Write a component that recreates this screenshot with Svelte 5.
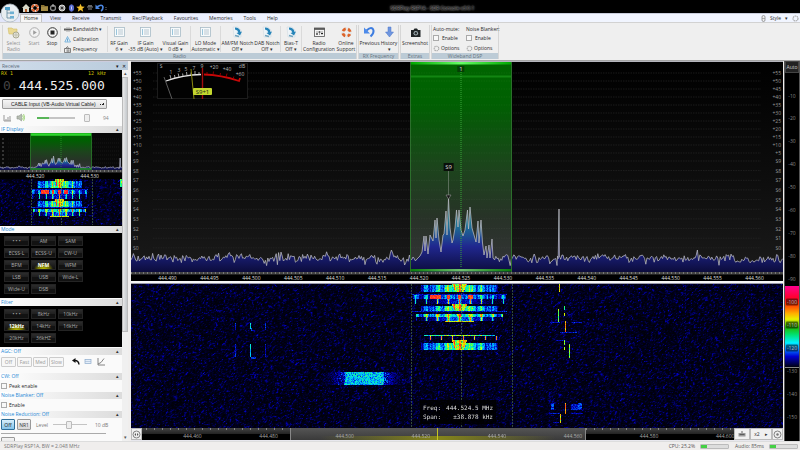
<script>
  import { onMount } from 'svelte';

  const tabs = ['View', 'Receive', 'Transmit', 'Rec/Playback', 'Favourites', 'Memories', 'Tools', 'Help'];
  const modes = ['• • •', 'AM', 'SAM', 'ECSS-L', 'ECSS-U', 'CW-U', 'BFM', 'NFM', 'WFM', 'LSB', 'USB', 'Wide-L', 'Wide-U', 'DSB'];
  const filters = ['• • •', '8kHz', '10kHz', '12kHz', '14kHz', '16kHz', '20kHz', '36kHZ'];

  const W = 652;
  const H = 210;

  function makeRandom(seed) {
    let s = seed;
    return () => {
      s = (s * 1664525 + 1013904223) % 4294967296;
      return s / 4294967296;
    };
  }

  // level labels: dB over S9 in 8 px steps, then S units
  const levels = [];
  for (let i = 0; i < 11; i++) levels.push({ t: '+' + (55 - i * 5), y: 11 + i * 8 });
  for (let i = 0; i < 10; i++) levels.push({ t: 'S' + (9 - i), y: 99 + i * 9.65 });

  const freqs = [];
  for (let i = 0; i < 15; i++) freqs.push({ t: (444.49 + i * 0.005).toFixed(3), x: ((36.5 + i * 41.93) / W) * 100 });

  const scale = [];
  for (let i = 0; i < 8; i++) scale.push({ t: (444.46 + i * 0.02).toFixed(3), x: ((50.5 + i * 76.1) / 592) * 100 });

  const dbm = [];
  for (let i = 1; i < 16; i++) dbm.push({ t: '-' + i * 10, y: ((34.5 + (i - 1) * 22.95) / 380) * 100, boxed: i > 9 && i < 13 });

  const peaks = [
    [417, 259], [420, 256], [422, 252], [424, 236], [425, 251], [426, 236], [428, 254], [430, 235], [432, 239], [433, 241],
    [435, 220], [436, 238], [437, 218], [439, 240], [441, 252], [443, 235], [444, 234], [446, 211], [447, 235], [448.5, 199],
    [450, 228], [452, 243], [453, 240], [455, 228], [456.5, 210], [458, 227], [459, 210], [461, 230], [463, 236], [465, 230],
    [467.5, 210], [468.5, 229], [470, 207], [472, 228], [474, 235], [476, 242], [478, 221], [479, 243], [481, 220],
    [482.5, 243], [484, 255], [486, 246], [487, 258], [489, 245], [490, 258], [492, 239], [493, 258]
  ];

  function buildTrace() {
    const rnd = makeRandom(41);
    const pts = [];
    let base = 0;
    for (let x = 131; x <= 783; x += 1.2) {
      base = base * 0.75 + (rnd() - 0.5) * 3.2;
      const jitter = (rnd() - 0.5) * 5.5;
      const spike = rnd();
      if (x > 416 && x < 494) continue;
      let y = 258 + base + jitter;
      if (spike > 0.96) y -= 4;
      if (spike < 0.04) y += 5;
      pts.push([x, y]);
    }
    pts.push(...peaks, [557.5, 256], [559, 209], [560.5, 258]);
    return pts.sort((a, b) => a[0] - b[0]);
  }
  const trace = buildTrace();
  const line = trace.map(([x, y]) => `${(x - 131).toFixed(1)},${(y - 62).toFixed(1)}`).join(' ');
  const area = `0,${H} ${line} ${W},${H}`;

  const miniTrace = trace.map(([x, y]) => [61 + (x - 461) * 0.604, 34.5 + (y - 259) * 0.19]).filter(([x]) => x >= -1 && x <= 123);
  const miniLine = miniTrace.map(([x, y]) => `${x.toFixed(1)},${y.toFixed(1)}`).join(' ');
  const miniArea = `0,37 ${miniLine} 122,37`;

  const stops = [
    [0, 0, 0, 8], [0.12, 0, 0, 40], [0.35, 0, 0, 190], [0.48, 0, 120, 255], [0.58, 0, 225, 235],
    [0.68, 30, 255, 110], [0.78, 220, 255, 0], [0.88, 255, 130, 0], [1, 255, 25, 50]
  ];
  function colour(v) {
    const c = Math.max(0, Math.min(1, v));
    for (let i = 1; i < stops.length; i++) {
      if (c <= stops[i][0]) {
        const a = stops[i - 1];
        const b = stops[i];
        const k = (c - a[0]) / (b[0] - a[0]);
        return [a[1] + (b[1] - a[1]) * k, a[2] + (b[2] - a[2]) * k, a[3] + (b[3] - a[3]) * k];
      }
    }
    return [255, 25, 50];
  }

  function comb(dx, step, width) {
    const d = Math.abs(dx - Math.round(dx / step) * step);
    return Math.exp(-((d / width) ** 2));
  }

  // strength of the FM transmission at distance dx from its carrier and row y
  function burst(dx, y) {
    const a = Math.abs(dx);
    const env = Math.exp(-((dx / 32) ** 2));
    const grain = 0.06 * Math.sin(dx * 2.1) + 0.05 * Math.sin(dx * 0.9 + 1);
    const wide = (y0, y1) => {
      const k = (y - y0) / (y1 - y0);
      if (a < 8 - k * 4) return 0.76 + 0.12 * comb(dx, 5, 1) + grain;
      if (k < 0.3 || a > 38) return 0;
      return 0.24 + 0.3 * env + 0.26 * comb(dx, 11, 2.5 + k) * (0.4 + 0.6 * env) + grain;
    };
    if (y < 8) return wide(-2, 8);
    if (y === 10 || y === 27) return a < 48 ? 0.36 : 0;
    if (y > 10 && y < 15) {
      if (a > 46) return 0;
      if (dx > -30 && dx < -18) return 0.97;
      if (a < 2 || (dx > 8 && dx < 14) || Math.abs(dx + 11) < 2) return 0.97;
      return a > 28 ? 0.3 + 0.3 * comb(dx, 11, 2) + grain : 0.44 + 0.2 * comb(dx, 11, 2.5) + grain;
    }
    if (y >= 15 && y < 20) return a < 46 ? 0.36 * env + 0.55 * comb(dx, 11, 0.9) : 0;
    if (y >= 20 && y < 28) return wide(19, 28);
    if (y >= 30 && y < 33) return a < 44 ? 0.36 + 0.22 * env + 0.35 * comb(dx, 11, 2) + grain : 0;
    if (y >= 33 && y < 37) return a < 44 ? 0.45 * env + 0.5 * comb(dx, 11, 1.2) : 0;
    if (y === 37) return a < 15 ? 0.8 : 0;
    if (y === 51) return a < 36 ? 0.5 + 0.25 * env + grain : 0;
    if (y >= 52 && y < 56) return a < 40 ? 0.85 * comb(dx - 4, 11, 0.9) : 0;
    if (y >= 56 && y < 66) return wide(55, 66);
    return 0;
  }

  // short narrow traces: x0, x1, y0, y1, level
  const marks = [
    [104, 104, 39, 45, 0.38], [119, 119, 39, 44, 0.55], [120, 120, 44, 45, 0.5], [120, 123, 46, 46, 0.35], [134, 134, 39, 45, 0.38],
    [104, 104, 60, 72, 0.36], [119, 119, 60, 72, 0.56], [120, 124, 73, 74, 0.38], [134, 134, 60, 72, 0.34], [119, 130, 90, 90, 0.22],
    [428, 428, 0, 7, 0.78], [427, 427, 25, 37, 0.7], [433, 433, 22, 25, 0.7], [433, 433, 29, 31, 0.72], [434, 434, 37, 47, 0.86],
    [419, 428, 38, 38, 0.38], [441, 450, 38, 38, 0.38], [429, 445, 48, 48, 0.36], [425, 432, 56, 56, 0.34],
    [433, 433, 56, 60, 0.72], [433, 433, 63, 65, 0.72], [438, 438, 60, 73, 0.7], [434, 434, 119, 129, 0.88],
    [420, 422, 119, 125, 0.4], [440, 450, 120, 125, 0.35], [447, 450, 119, 124, 0.42], [418, 428, 129, 129, 0.36], [440, 451, 129, 129, 0.32],
    [429, 429, 130, 138, 0.8], [422, 427, 138, 138, 0.34]
  ];

  let fall;
  let miniFall;

  function paint(canvas, w, h, seed, level) {
    const ctx = canvas.getContext('2d');
    const img = ctx.createImageData(w, h);
    const rnd = makeRandom(seed);
    const noise = new Float32Array((w + 1) * (h + 1));
    for (let i = 0; i < noise.length; i++) noise[i] = rnd();
    for (let y = 0; y < h; y++) {
      for (let x = 0; x < w; x++) {
        const i = y * (w + 1) + x;
        const n = noise[i] * 0.4 + noise[i + 1] * 0.35 + noise[i + w + 1] * 0.25;
        let v = Math.pow(n, 2.5) * 0.4;
        const s = level(x, y);
        if (s > 0.03) v = Math.max(v, s + (rnd() - 0.5) * 0.16);
        const c = colour(v);
        img.data.set([c[0], c[1], c[2], 255], (y * w + x) * 4);
      }
    }
    ctx.putImageData(img, 0, 0);
  }

  onMount(() => {
    const rnd = makeRandom(7);
    paint(fall, W, 144, 99, (x, y) => {
      let s = burst(x - 328, y);
      if (y >= 88 && y < 101) {
        const d = Math.abs(x - 233);
        if (d < 40) s = d < 20 ? 0.46 + rnd() * 0.18 : (0.5 - (d - 20) * 0.02) * (0.4 + rnd() * 0.6);
      }
      if (x === 554) s = rnd() * 0.22;
      for (const m of marks) if (x >= m[0] && x <= m[1] && y >= m[2] && y <= m[3]) s = Math.max(s, m[4]);
      return s;
    });
    paint(miniFall, 122, 46, 17, (x, y) => {
      if (x > 119 && y < 8) return 0.7;
      const row = y < 9 ? y - 1 : y < 19 ? 11 + (y - 11) * 0.9 : y < 29 ? 20 + (y - 20) * 0.9 : y < 38 ? 30 + (y - 30) : 200;
      return burst((x - 59) / 0.604, Math.round(row));
    });
  });
</script>

{#snippet icon(name)}
  {#if name === 'select'}
    <svg width="13" height="13" viewBox="0 0 13 13"><path d="M1 2h4l1 1h4v5H2z" fill="#ead992" stroke="#d2bd6a" stroke-width=".6" /><circle cx="9" cy="9" r="3" fill="#e4e4d8" stroke="#aaa992" /><path d="M9 7v4M7 9h4" stroke="#b9b9a9" stroke-width=".7" /></svg>
  {:else if name === 'start'}
    <svg width="13" height="13" viewBox="0 0 13 13"><circle cx="6.500" cy="6.500" r="4.800" fill="#f2f2f2" stroke="#a6a6a6" stroke-width=".9" /><path d="M5.200 4.200v4.600l3.600-2.300z" fill="#9d9d9d" /></svg>
  {:else if name === 'stop'}
    <svg width="13" height="13" viewBox="0 0 13 13"><circle cx="6.500" cy="6.500" r="4.800" fill="#f4f4f4" stroke="#333" /><rect x="4.500" y="4.500" width="4" height="4" fill="#222" /></svg>
  {:else if name === 'list'}
    <svg width="13" height="13" viewBox="0 0 13 13"><rect x="1.500" y="1.500" width="10" height="9" fill="#f7fafb" stroke="#a9bcc7" stroke-width=".8" /><path d="M3 4h1M3 6h1M3 8h1" stroke="#3d91bd" /><path d="M5 4h5M5 6h5M5 8h5" stroke="#9fb3c1" stroke-width=".7" /></svg>
  {:else if name === 'notch'}
    <svg width="13" height="13" viewBox="0 0 13 13"><path d="M2 1h5l3 3v7H3z" fill="#eef4f8" stroke="#cad5dc" stroke-width=".5" /><path d="M4 1.500q5 0 5.500 4.500l1.500-.5-2 4-3.500-2.500 1.800-.5Q7 4 4 3.500z" fill="#2684b8" /><path d="M4 9.500l4 1" stroke="#6fa3bd" stroke-width="1.300" /></svg>
  {:else if name === 'config'}
    <svg width="13" height="13" viewBox="0 0 13 13"><rect x="1.500" y="2" width="10" height="8.500" fill="#f5f5f5" stroke="#555" stroke-width=".8" /><path d="M1.500 3h10" stroke="#333" stroke-width="1.400" /><path d="M4 5v4M6.500 5v4M9 5v4" stroke="#777" stroke-width=".7" /><path d="M3 8h2M5.500 6h2M8 7.500h2" stroke="#222" /></svg>
  {:else if name === 'support'}
    <svg width="13" height="13" viewBox="0 0 13 13"><circle cx="6.500" cy="6.500" r="3.700" fill="none" stroke="#e3e5e5" stroke-width="2.800" /><circle cx="6.500" cy="6.500" r="3.700" fill="none" stroke="#dd6329" stroke-width="2.800" stroke-dasharray="3.600 2.210" stroke-dashoffset="1.800" transform="rotate(45 6.500 6.500)" /></svg>
  {:else if name === 'previous'}
    <svg width="13" height="13" viewBox="0 0 13 13"><path d="M3.500 4.500Q9-.5 10.500 4.500q.5 3-3 6" fill="none" stroke="#3e7de0" stroke-width="2" /><path d="M1 1.500v6h6z" fill="#4c8aea" /></svg>
  {:else if name === 'history'}
    <svg width="13" height="13" viewBox="0 0 13 13"><path d="M5 1h3v5h2.500l-4 5-4-5H5z" fill="#6f96df" stroke="#4c77c8" stroke-width=".5" /></svg>
  {:else if name === 'camera'}
    <svg width="13" height="13" viewBox="0 0 13 13"><path d="M2 4h2.500l1-1.500h2.500l1 1.500h2.500v7H2z" fill="#1f2426" /><circle cx="6.800" cy="7.300" r="2.300" fill="#9fabb0" /><circle cx="6.800" cy="7.300" r="1.200" fill="#23292b" /></svg>
  {/if}
{/snippet}

{#snippet tool(name, a, b, w, dim)}
  <button class="tool" class:dim style:width="{w}px">
    {@render icon(name)}
    <span>{a}</span>
    {#if b}<span>{b}</span>{/if}
  </button>
{/snippet}

{#snippet head(title)}
  <h2 class="sec"><span>{title}</span><span class="fold">▴</span></h2>
{/snippet}

<div class="app">
  <header class="title">
    <div class="quick">
      <svg width="86" height="10" viewBox="0 0 86 10">
        <path d="M1 5l4-4 4 4H8v4H6V6H4v3H2V5z" fill="#d8d8c8" /><path d="M4 6h2v3H4z" fill="#b65c2b" />
        <circle cx="14" cy="5" r="3" fill="none" stroke="#ddd" stroke-width="2" /><circle cx="14" cy="5" r="3" fill="none" stroke="#dc5a23" stroke-width="2" stroke-dasharray="3.500 1.210" />
        <path d="M20 2h3l1 1h3v5h-7z" fill="#8b7435" /><path d="M20 4h7v4h-7z" fill="#a58c46" />
        <circle cx="32" cy="5" r="2.500" fill="none" stroke="#888" stroke-width="1.300" /><path d="M32 1v3" stroke="#bbb" />
        <circle cx="41" cy="5" r="3" fill="#999" stroke="#ddd" /><circle cx="41" cy="5" r="1" fill="#111" />
        <ellipse cx="50.500" cy="5" rx="2.200" ry="3.300" fill="#2b45c4" stroke="#7788ea" stroke-width=".7" /><path d="M49.500 3.500l2 3M51.500 3.500l-2 3M50.500 2.500v5" stroke="#fff" stroke-width=".5" />
        <path d="M59.500.8l1.200 2.800 3 .2-2.300 2 .8 3-2.700-1.700-2.700 1.700.8-3-2.300-2 3-.2z" fill="#f2bf2a" />
        <path d="M66 4h6M67 6h4" stroke="#858585" stroke-width="1.200" /><path d="M67 2h4v2h-4z" fill="#666" />
        <path d="M76 4q5-3.500 6 0 0 3-2 4" fill="none" stroke="#4b86e0" stroke-width="1.700" /><path d="M74.500 1.500v4.500h4.500z" fill="#4b86e0" />
        <path d="M85 4v1M85 6v1" stroke="#777" />
      </svg>
    </div>
    <h1>SDRPlay RSP1A - SDR Console v3.0.1</h1>
  </header>

  <nav class="tabs">
    <a class="tab on" href="#home">Home</a>
    {#each tabs as t}<a class="tab" href="#{t.toLowerCase()}">{t}</a>{/each}
    <div class="style">
      <svg width="5" height="7" viewBox="0 0 5 7"><rect x="1" y=".5" width="3" height="6" rx="1.500" fill="#eee" stroke="#888" stroke-width=".8" /><path d="M1 3.500h3" stroke="#888" stroke-width=".6" /></svg>
      <button>Style</button><span>▾</span>
      <svg width="7" height="7" viewBox="0 0 7 7"><circle cx="3.500" cy="3.500" r="2.500" fill="none" stroke="#aaa" stroke-width="1.200" stroke-dasharray="1.600 .5" /></svg>
    </div>
    <button class="orb" aria-label="Application menu">
      <svg width="20" height="20" viewBox="0 0 20 20">
        <circle cx="10" cy="10" r="9" fill="#e9edf0" stroke="#aeb9c2" stroke-width=".8" />
        <path d="M7 7v8M7 10h4M7 15h4M7 7h3" stroke="#6c8ea3" stroke-width=".9" fill="none" />
        <rect x="5" y="4" width="5" height="3" fill="#4d9fc9" /><rect x="10" y="8.500" width="4" height="2.600" fill="#6fb0d2" /><rect x="10" y="13" width="4" height="2.600" fill="#6fb0d2" />
      </svg>
    </button>
  </nav>

  <div class="ribbon">
    <section class="group">
      <div class="row">
        {@render tool('select', 'Select', 'Radio', 21, true)}
        {@render tool('start', 'Start', '', 20, true)}
        {@render tool('stop', 'Stop', '', 16, false)}
        <i class="sep"></i>
        <div class="stack">
          <button><svg width="8" height="7" viewBox="0 0 8 7"><path d="M0 3.500h8M1.500 2L0 3.500 1.500 5M6.500 2L8 3.500 6.500 5M3 1.500v4M5 1.500v4" stroke="#444" stroke-width=".8" fill="none" /></svg>Bandwidth ▾</button>
          <button><svg width="8" height="7" viewBox="0 0 8 7"><path d="M3.500.5L6.500 6H.8z" fill="#dfeefa" stroke="#5ba3d4" stroke-width=".7" /><path d="M3.500 2.500v3" stroke="#4489bb" stroke-width=".7" /></svg>Calibration</button>
          <button><svg width="8" height="7" viewBox="0 0 8 7"><path d="M.5 2.500h6v4h-6zM1.500 2.500l2-2 1 2M2.500 4h3M2.500 5.200h3" fill="none" stroke="#555" stroke-width=".7" /></svg>Frequency</button>
        </div>
        <i class="sep"></i>
        {@render tool('list', 'RF Gain', '6 ▾', 22, false)}
        {@render tool('list', 'IF Gain', '-35 dB (Auto) ▾', 31, false)}
        {@render tool('list', 'Visual Gain', '0 dB ▾', 29, false)}
        <i class="sep"></i>
        {@render tool('list', 'LO Mode', 'Automatic ▾', 29, false)}
        <i class="sep"></i>
        {@render tool('notch', 'AM/FM Notch', 'Off ▾', 33, false)}
        {@render tool('notch', 'DAB Notch', 'Off ▾', 26, false)}
        <i class="sep"></i>
        {@render tool('notch', 'Bias-T', 'Off ▾', 20, false)}
        <i class="sep"></i>
        {@render tool('config', 'Radio', 'Configuration', 34, false)}
        {@render tool('support', 'Online', 'Support', 20, false)}
      </div>
      <h3>Radio</h3>
    </section>
    <section class="group">
      <div class="row">
        {@render tool('previous', 'Previous', '', 21, false)}
        {@render tool('history', 'History', '▾', 18, false)}
      </div>
      <h3>RX Frequency</h3>
    </section>
    <section class="group">
      <div class="row">{@render tool('camera', 'Screenshot', '', 28, false)}</div>
      <h3>Extras</h3>
    </section>
    <section class="group">
      <div class="row dsp">
        {#each ['Auto-mute:', 'Noise Blanker:'] as n}
          <div class="stack">
            <span>{n}</span>
            <label><input type="checkbox" />Enable</label>
            <button><svg width="7" height="7" viewBox="0 0 7 7"><circle cx="3.500" cy="3.500" r="2.300" fill="none" stroke="#aaa" stroke-width="1.100" stroke-dasharray="1.400 .5" /></svg>Options</button>
          </div>
        {/each}
      </div>
      <h3>Wideband DSP</h3>
    </section>
  </div>

  <div class="main">
    <aside>
      <div class="dock"><span>Receive</span><span class="tools">▾ &nbsp;✕</span></div>
      <div class="cols">
        <div class="panel">
          <div class="vfo">
            <div class="rx"><span>RX 1</span><span>12 kHz</span></div>
            <div class="freq"><span>0.</span>444.525.000</div>
          </div>
          <select class="device" aria-label="Output device"><option>CABLE Input (VB-Audio Virtual Cable)</option></select>
          <div class="audio">
            <svg width="8" height="8" viewBox="0 0 8 8"><path d="M1 1v6h7M3 7V5M5 7V3M7 7V2" fill="none" stroke="#999" /></svg>
            <svg width="9" height="9" viewBox="0 0 9 9"><path d="M1 3h2l2.500-2v7L3 6H1z" fill="#b7bdb3" stroke="#8d958a" stroke-width=".6" /><path d="M6.500 2.500q1.600 2 0 4M7.600 1.200q2 3.300 0 6.600" fill="none" stroke="#8fcc63" stroke-width=".9" /></svg>
            <input type="range" class="vol" min="0" max="100" value="94" aria-label="Volume" />
            <span>94</span>
          </div>
          {@render head('IF Display')}
          <div class="mini">
            <svg class="spec" viewBox="0 0 122 37" preserveAspectRatio="none">
              <rect width="122" height="37" fill="#090909" />
              {#each [6, 10, 14, 18, 22, 26, 30] as y}<path d="M8 {y}h112" stroke="#262626" stroke-width=".5" stroke-dasharray="1 1" /><path d="M2 {y}h2" stroke="#777" stroke-width=".8" />{/each}
              <rect x="30.500" width="61" height="37" fill="url(#pass)" />
              <polygon points={miniArea} fill="url(#under)" />
              <polyline points={miniLine} fill="none" stroke="#b9b9c9" stroke-width=".7" />
              <path d="M61 3v33" stroke="#35ad35" stroke-width=".6" stroke-dasharray="1 1" />
              <path d="M30.500 0v37M91.500 0v37" stroke="#2f8a2f" stroke-width=".7" />
              <path d="M31 1.500h60" stroke="#2fd82f" stroke-width="2.500" /><path d="M31 36h60" stroke="#239a23" stroke-width="1.500" />
            </svg>
            <div class="ticks"></div>
            <div class="minilabels"><span>444.520</span><span>444.530</span></div>
            <div class="wf">
              <canvas bind:this={miniFall} width="122" height="46"></canvas>
              {#each [25, 50, 75] as x}<i class="dash" style:left="{x}%"></i>{/each}
            </div>
          </div>
          {@render head('Mode')}
          <div class="pad">
            {#each modes as m}<button class:sel={m === 'NFM'}>{m}</button>{/each}
          </div>
          {@render head('Filter')}
          <div class="pad">
            {#each filters as m}<button class:sel={m === '12kHz'}>{m}</button>{/each}
          </div>
          {@render head('AGC: Off')}
          <div class="agc">
            {#each ['Off', 'Fast', 'Med', 'Slow'] as a}<button>{a}</button>{/each}
            <svg width="36" height="9" viewBox="0 0 36 9"><path d="M4.500 1v5L1 3.500z" fill="#111" /><path d="M4 3.500q3.500 0 4 4" fill="none" stroke="#111" stroke-width="1.400" /><rect x="14" y="2.500" width="6" height="4" fill="#e4eefa" stroke="#8caacb" stroke-width=".7" /><path d="M14 4.500h6" stroke="#9fb7d0" stroke-width=".6" /><path d="M27 1v7h7M27 7l3-1.500L33 1.500" fill="none" stroke="#777" stroke-width=".9" /></svg>
          </div>
          {@render head('CW: Off')}
          <label class="check"><input type="checkbox" />Peak enable</label>
          {@render head('Noise Blanker: Off')}
          <label class="check"><input type="checkbox" />Enable</label>
          {@render head('Noise Reduction: Off')}
          <div class="nr">
            <button class="on">Off</button><button>NR1</button><label for="nrl">Level</label>
            <input id="nrl" type="range" min="0" max="20" value="9" /><span>10 dB</span>
          </div>
          <div class="rule"></div>
          <div class="nr more"><button aria-label="More noise reduction"></button></div>
        </div>
        <div class="scroll"><span>▴</span><div class="thumb"></div><span>▾</span></div>
      </div>
    </aside>

    <main>
      <div class="spectrum">
        <svg class="fill" viewBox="0 0 {W} {H}" preserveAspectRatio="none">
          <defs>
            <linearGradient id="bg" x1="0" y1="0" x2="0" y2="1"><stop offset="0" stop-color="#000" /><stop offset=".55" stop-color="#0d0d0d" /><stop offset="1" stop-color="#1a1a1a" /></linearGradient>
            <linearGradient id="pass" x1="0" y1="0" x2="0" y2="1"><stop offset="0" stop-color="#006600" /><stop offset=".2" stop-color="#005f02" /><stop offset=".5" stop-color="#1c441c" /><stop offset=".75" stop-color="#283228" /><stop offset="1" stop-color="#343438" /></linearGradient>
            <linearGradient id="under" x1="0" y1="0" x2="0" y2="1"><stop offset="0" stop-color="#4d8c80" /><stop offset=".35" stop-color="#1f7594" /><stop offset=".65" stop-color="#20278f" /><stop offset="1" stop-color="#0c0c3c" /></linearGradient>
            <linearGradient id="bar"><stop offset="0" stop-color="#00a800" /><stop offset=".5" stop-color="#66ff66" /><stop offset="1" stop-color="#00a800" /></linearGradient>
            <linearGradient id="foot"><stop offset="0" stop-color="#0b7d0b" /><stop offset=".5" stop-color="#6fbf6f" /><stop offset="1" stop-color="#0b7d0b" /></linearGradient>
          </defs>
          <rect width={W} height={H} fill="url(#bg)" />
          {#each levels as l}<path d="M22 {l.y}H630" stroke="#262626" stroke-width=".7" stroke-dasharray="1.500 1" />{/each}
          <rect x="279.500" width="101" height={H} fill="url(#pass)" />
          {#each levels as l}<path d="M280 {l.y}H380" stroke="#fff" stroke-opacity=".06" stroke-width=".7" stroke-dasharray="1.500 1" />{/each}
          <path d="M280 14.500h100" stroke="#128512" stroke-width="2" />
          <polygon points={area} fill="url(#under)" />
          <polyline points={line} fill="none" stroke="#b5b5bd" stroke-width=".8" />
          <path d="M330 8V206" stroke="#38a638" stroke-width="1" stroke-dasharray="1 1" />
          <path d="M279.500 0V210M380.500 0V210" stroke="#2c6e2c" />
          <rect x="280" y="0" width="100" height="2.500" fill="url(#bar)" /><rect x="280" y="207" width="100" height="2.500" fill="url(#foot)" />
          <path d="M317.500 109V133" stroke="#6a7a6a" stroke-width=".8" /><path d="M315 133h5l-2.500 4z" fill="#111" stroke="#999" stroke-width=".6" />
        </svg>
        {#each levels as l}
          <span class="lv l" style:top="{(l.y / H) * 100}%">{l.t}</span>
          <span class="lv r" style:top="{(l.y / H) * 100}%">{l.t}</span>
        {/each}
        <span class="flag one">1</span>
        <span class="flag s9">S9</span>
        <svg class="meter" width="91" height="36" viewBox="0 0 91 36">
          <rect x=".5" y=".5" width="90" height="35" fill="#020202" stroke="#1c1c1c" />
          <path d="M7 14L15 36" stroke="#666" stroke-width=".9" />
          <path d="M9 18Q26 12 44 11.500" fill="none" stroke="#e5e5e5" stroke-width="1.300" />
          <path d="M14 16l-1-4M18 15l-.5-3M22 14l-.8-3.500M26 13l-.4-2.500M30 12.500l-.5-3.500M34 12v-2.500M38 11.500v-3.500M42 11.500v-2.500" stroke="#ccc" stroke-width=".8" />
          <path d="M47 11.500Q64 12 82 18l1-3" fill="none" stroke="#c80808" stroke-width="1.800" />
          <path d="M50 11V9M56 12l.5-3.500M63 12.500l.5-2.500M69 14l1-3.500M76 16l.8-2.500" stroke="#a00" stroke-width=".8" />
          <path d="M34 6L37 36" stroke="#8b8b10" stroke-width="1" /><path d="M45.500 5V36" stroke="#a00d0d" stroke-width="1.400" />
          <g fill="#bbb" font-size="5" text-anchor="middle">
            <text x="4" y="5">S</text><text x="14" y="11">1</text><text x="22" y="9">3</text><text x="29" y="8">5</text><text x="37" y="7">7</text><text x="45" y="5">9</text>
            <text x="57" y="6">+20</text><text x="70" y="8">+40</text><text x="83" y="13">+60</text><text x="85" y="5">dB</text>
          </g>
          <rect x="36" y="25" width="19" height="7" rx="1" fill="#c3d72e" /><text x="45.500" y="31" font-size="6" text-anchor="middle" fill="#222">S9+1</text>
        </svg>
      </div>
      <div class="ticks"></div>
      <div class="labels">{#each freqs as f}<span style:left="{f.x}%">{f.t}</span>{/each}</div>
      <div class="split"></div>
      <div class="wf big">
        <canvas bind:this={fall} width={W} height="144"></canvas>
        {#each [42.9, 50.6, 58.4] as x}<i class="dash" style:left="{x}%"></i>{/each}
        <div class="info"><span>Freq:</span><span>444.524.5 MHz</span><span>Span:</span><span>±38.878 kHz</span></div>
      </div>
      <div class="nav">
        <button aria-label="Centre"><svg width="9" height="9" viewBox="0 0 9 9"><circle cx="4.500" cy="4.500" r="3.500" fill="#eee" stroke="#666" stroke-width=".8" /><path d="M2.500 4.500L4 3v3zM6.500 4.500L5 3v3z" fill="#555" /></svg></button>
        <div class="band">
          <div class="view"></div>
          {#each scale as f}<span style:left="{f.x}%">{f.t}</span>{/each}
        </div>
        <button class="wide" aria-label="Bands"><svg width="8" height="6" viewBox="0 0 8 6"><path d="M.5 2h7v3.500h-7z" fill="#999" /><path d="M4 2V0M1.500 3.500h5" fill="none" stroke="#555" stroke-width=".9" /></svg></button>
        <button class="zoom">x2 <span>▸</span></button>
        <button aria-label="Settings"><svg width="9" height="9" viewBox="0 0 9 9"><circle cx="4.500" cy="4.500" r="3.500" fill="#eee" stroke="#666" stroke-width=".8" /><circle cx="4.500" cy="4.500" r="1.200" fill="#777" /></svg></button>
      </div>
    </main>

    <div class="level">
      <button>Auto</button>
      <div class="ramp"></div>
      {#each dbm as d}<span class:boxed={d.boxed} style:top="{d.y}%">{d.t}</span>{/each}
    </div>
  </div>

  <footer>
    <span class="dev">SDRPlay RSP1A, BW = 2.048 MHz</span>
    <span>CPU: 25.2%</span><div class="bar"><i></i></div>
    <span>Audio: 85ms</span><div class="bar"><i></i></div>
  </footer>
</div>

<style>
  :global(body) { margin: 0; background: #f0eeed; }
  * { box-sizing: border-box; }
  .app { height: 100vh; min-height: 450px; display: flex; flex-direction: column; overflow: hidden; font: 5px/6px "Open Sans", sans-serif; color: #2c2c2c; background: #f0eeed; }
  button, input, select { font: inherit; color: inherit; margin: 0; padding: 0; border: 0; background: none; }
  h1, h2, h3 { margin: 0; font: inherit; }
  a { color: inherit; text-decoration: none; }
  svg { display: block; flex: none; }

  .title { flex: none; height: 13px; background: #000; display: flex; align-items: center; }
  .quick { padding: 3px 0 0 21px; }
  .title h1 { flex: 1; text-align: center; color: #111; padding: 3px 42px 0 0; text-shadow: 0 0 2px #aaa, 0 0 2px #999, 0 0 3px #888; }

  .tabs { flex: none; position: relative; height: 9px; display: flex; gap: 11px; padding-left: 20px; background: linear-gradient(90deg, #e2e6fa, #f1f5ff 40%); border-top: 1px solid #c9cddb; }
  .tab { line-height: 8px; }
  .tab.on { width: 22px; margin-right: -3px; text-align: center; background: #f6f6f6; border: 1px solid #c4c4c4; border-bottom: 0; line-height: 7px; }
  .style { margin-left: auto; padding-right: 1px; display: flex; align-items: center; gap: 4px; }
  .orb { position: absolute; left: 0; top: -11px; }

  .ribbon { flex: none; height: 39px; display: flex; gap: 1px; padding: 2px 2px 1px; background: #efefef; border-top: 1px solid #d2d2d2; border-bottom: 1px solid #a5a5a5; }
  .group { display: flex; flex-direction: column; border: 1px solid #d6d6d6; border-width: 0 1px; }
  .row { flex: 1; display: flex; }
  .group h3 { background: #bccbd6; text-align: center; color: #66747f; line-height: 6px; }
  .tool { display: flex; flex-direction: column; align-items: center; white-space: nowrap; flex: none; padding-top: 1px; }
  .tool svg { margin-bottom: 1px; }
  .dim { color: #8f8f8f; }
  .sep { width: 1px; margin: 1px 0; background: #dadada; flex: none; }
  .stack { display: flex; flex-direction: column; gap: 2px; width: 46px; padding: 0 3px; white-space: nowrap; }
  .stack button, .stack label { display: flex; align-items: center; gap: 1px; height: 8px; }
  .stack span { height: 7px; line-height: 8px; }
  .dsp .stack { width: 33px; padding: 0 1px; }
  input[type="checkbox"] { appearance: none; width: 6px; height: 6px; border: 1px solid #aaa; background: #f8f8f8; margin-right: 2px; flex: none; }

  .main { flex: 1; min-height: 0; display: flex; }
  aside { width: 128px; flex: none; display: flex; flex-direction: column; background: #f0f0f0; border-top: 1px solid #ccd; overflow: hidden; }
  .dock { height: 8px; flex: none; display: flex; justify-content: space-between; padding: 0 2px; line-height: 8px; background: linear-gradient(90deg, #cfdcea, #b9cbdc); color: #5c6b7b; }
  .tools { color: #111; }
  .cols { flex: 1; min-height: 0; display: flex; }
  .panel { flex: 1; min-width: 0; overflow: hidden; background: #fafafa; }
  .vfo { height: 27px; background: #000; font-family: "DejaVu Sans Mono", monospace; }
  .rx { display: flex; justify-content: space-between; padding: 0 16px 0 1px; color: #d2c500; }
  .freq { font-size: 13px; line-height: 20px; color: #eee; padding-left: 3px; }
  .freq span { color: #444; }
  .device { appearance: none; display: block; width: 105px; height: 10px; margin: 2px 0 0 2px; padding: 0 2px 0 8px; border: 1px solid #999; border-radius: 1px; font: 5px "Liberation Sans Narrow", "Liberation Sans", sans-serif; color: #222; background: linear-gradient(225deg, transparent 50%, #222 0) right 4px top 3px / 2px 2px no-repeat, linear-gradient(135deg, transparent 50%, #222 0) right 2px top 3px / 2px 2px no-repeat, linear-gradient(#f5f5f5, #ddd); }
  .audio { height: 17px; display: flex; align-items: center; gap: 5px; padding: 0 3px; color: #888; }
  .audio span { margin-left: 5px; }
  input[type="range"] { appearance: none; height: 8px; }
  .vol { width: 56px; margin-left: 7px; background: linear-gradient(90deg, #58b558 12px, #c4c4c4 0) 0 50% / 38px 2px no-repeat; }
  input[type="range"]::-webkit-slider-thumb { appearance: none; width: 6px; height: 8px; border: 1px solid #bbb; border-radius: 1px; background: #eee; }
  .sec { height: 7px; display: flex; justify-content: space-between; padding: 0 3px 0 1px; line-height: 7px; color: #1f88d6; background: linear-gradient(90deg, #fff, #dcdcdc); }
  .fold { color: #333; }
  .mini { background: #000; padding-bottom: 1px; }
  .spec { width: 100%; height: 37px; }
  .ticks { flex: none; height: 3px; background: repeating-linear-gradient(90deg, #777 0 1px, #444 1px 4px); border-bottom: 1px solid #222; }
  .minilabels { height: 6px; display: flex; justify-content: space-around; color: #ddd; padding: 0 5px 0 8px; }
  .wf { position: relative; height: 46px; }
  canvas { display: block; width: 100%; height: 100%; }
  .dash { position: absolute; top: 0; bottom: 0; width: 1px; background: repeating-linear-gradient(#47694a 0 2px, transparent 2px 3px); opacity: .7; }
  .pad { display: grid; grid-template-columns: repeat(3, 25px); grid-auto-rows: 10px; gap: 2px; padding: 3px 4px 4px; background: #000; margin-bottom: 1px; }
  .pad button { background: linear-gradient(#2c2c2c, #1f1f1f 50%, #121212 50%); border: 1px solid #242424; color: #aaa; line-height: 8px; }
  .pad .sel { color: #fff; font-weight: 700; background: radial-gradient(ellipse at 50% 110%, #c8c800, #777700 35%, transparent 60%), linear-gradient(#2c2c2c, #111); }
  .agc { height: 18px; display: flex; padding: 2px 1px 6px; }
  .agc button { width: 15px; border: 1px solid #ccc; border-radius: 1px; color: #999; background: #f7f7f7; margin-right: 1px; line-height: 8px; }
  .agc svg { margin-left: 6px; }
  .check { display: flex; align-items: center; height: 12px; padding-left: 1px; }
  .nr { height: 12px; display: flex; align-items: center; gap: 2px; padding: 1px 1px 0; color: #777; }
  .nr button { width: 14px; height: 11px; border: 1px solid #999; border-radius: 1px; background: linear-gradient(#f4f4f4, #d8d8d8); color: #333; }
  .nr .on { border-color: #2f6f99; background: linear-gradient(#d8effb, #85c4ea); color: #111; }
  .nr label { width: 18px; padding-left: 3px; }
  .nr input { width: 34px; background: linear-gradient(#c4c4c4, #c4c4c4) 0 50% / 100% 1px no-repeat; }
  .nr span { padding-left: 6px; }
  .rule { height: 1px; margin: 3px 16px 2px 1px; background: #aaa; }
  .scroll { width: 6px; flex: none; display: flex; flex-direction: column; align-items: center; background: #f0f0f0; }
  .scroll span { height: 7px; color: #555; }
  .thumb { flex: 255 1 0; width: 6px; margin-bottom: 102px; background: linear-gradient(90deg, #e8e8e8, #c4c8cc); border: 1px solid #bbb; }

  main { flex: 1; min-width: 0; display: flex; flex-direction: column; margin-left: 3px; padding-bottom: 1px; border-top: 1px solid #b5b5bd; background: #e8e8ee; }
  .spectrum { position: relative; flex: 210 1 0; min-height: 0; background: #000; }
  .fill { position: absolute; width: 100%; height: 100%; }
  .lv { position: absolute; line-height: 6px; margin-top: -3px; color: #999; }
  .l { left: 2px; }
  .r { right: 2px; }
  .flag { position: absolute; transform: translateX(-50%); background: #0a0f0a; color: #ddd; padding: 0 2px; font-size: 6px; }
  .one { left: 50.6%; top: 4px; line-height: 6px; background: #053f05; }
  .s9 { left: 48.7%; top: 48%; line-height: 8px; }
  .meter { position: absolute; left: 26px; top: 1px; font-family: "Open Sans", sans-serif; }
  .labels { flex: none; position: relative; height: 6px; background: #000; color: #ddd; }
  .labels span, .band span { position: absolute; transform: translateX(-50%); }
  .split { flex: none; height: 3px; background: #f6f6f6; border-bottom: 1px solid #99a; }
  .big { flex: 144 1 0; min-height: 0; height: auto; }
  .big canvas { position: absolute; }
  .info { position: absolute; left: 289px; bottom: 4px; width: 76px; height: 24px; display: grid; grid-template-columns: 18px 1fr; padding: 3px; column-gap: 3px; background: rgba(0, 0, 0, .85); color: #ddd; font: 6px/9px "DejaVu Sans Mono", monospace; white-space: nowrap; }
  .info span:nth-child(2n) { text-align: right; }
  .nav { flex: none; height: 12px; display: flex; background: #e4e4e4; }
  .nav button { width: 11px; display: flex; align-items: center; justify-content: center; border: 1px solid #bbb; background: #f0f0f0; }
  .nav .wide { width: 16px; }
  .nav .zoom { width: 22px; gap: 5px; }
  .band { position: relative; flex: 1; overflow: hidden; background: repeating-linear-gradient(90deg, #888 0 1px, transparent 1px 8px) 4px 0 / 100% 2px no-repeat, linear-gradient(#444, #222 50%, #000 50%); color: #aaa; }
  .band span { top: 5px; }
  .view { position: absolute; left: 25%; right: 25%; top: 0; bottom: 0; border: 1px solid #888; border-width: 0 1px; background: linear-gradient(90deg, transparent 49.5%, #c5c520 49.5% 50%, transparent 50%), linear-gradient(90deg, transparent 10%, #85851a 50%, transparent 90%) 0 100% / 100% 4px no-repeat, linear-gradient(#555, #3a3a3a); }

  .level { position: relative; flex: none; width: 16px; margin-left: 1px; background: #000; border: 1px solid #555; border-width: 0 1px; }
  .level button { display: block; width: 100%; height: 12px; color: #ccc; background: #222; border: 1px solid #444; }
  .level span { position: absolute; left: 50%; transform: translate(-50%, -50%); color: #8a8a8a; }
  .level .boxed { background: rgba(0, 0, 0, .5); color: #bbb; width: 12px; height: 7px; text-align: center; border-radius: 1px; }
  .ramp { position: absolute; left: 0; right: 0; top: 59.2%; height: 21.600%; border-bottom: 1px solid #888; background: linear-gradient(#ff0090, #ff0030 14%, #ff3000 22%, #ffb000 34%, #e8f000 41%, #20b800 51%, #00e070 60%, #00f0ff 70%, #0070ff 79%, #0000d0 87%, #000010); }

  footer { flex: none; height: 9px; display: flex; align-items: center; padding: 0 2px 0 4px; border-top: 1px solid #ddd; color: #555; }
  .dev { margin-right: auto; color: #777; }
  .bar { width: 29px; height: 5px; margin: 0 6px 0 5px; border: 1px solid #bbb; border-radius: 1px; background: #ddd; }
  .bar:last-child { margin-right: 0; }
  .bar i { display: block; width: 6px; height: 3px; background: #45d045; }
</style>
